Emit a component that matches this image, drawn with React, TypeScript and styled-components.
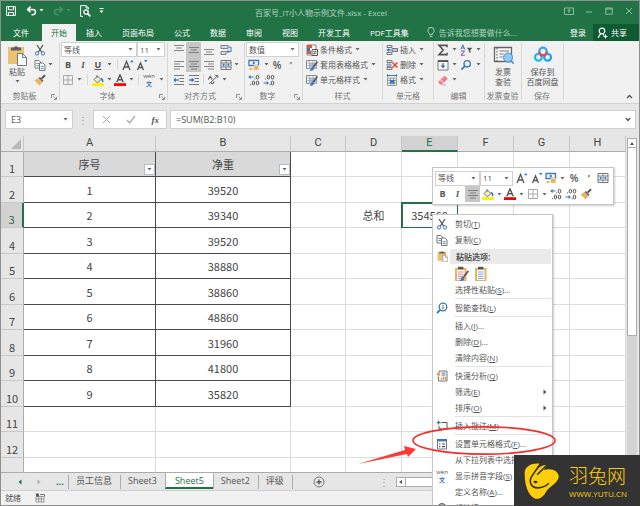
import React from "react";
import styled, { createGlobalStyle, css } from "styled-components";

const ui = `"Open Sans", "Noto Sans CJK SC", sans-serif`;
const GREEN = "#217346";
const INK = "#555";
const BLUE = "#3b78b8";
const SAND = "#e8b462";

const GlobalStyle = createGlobalStyle`
  * { box-sizing: border-box; }
  html, body { margin: 0; }
  body { font: 8px/12px ${ui}; color: #555; }
  button, input, select { font: inherit; color: inherit; margin: 0; padding: 0; border: 0; background: none; border-radius: 0; }
  svg { display: block; flex: none; }
`;

const Window = styled.main`
  position: relative;
  display: flex;
  flex-direction: column;
  height: 100vh;
  overflow: hidden;
  border: 1px solid #8f8f8f;
  background: #e6e6e6;
`;

/* ---------- title and tabs ---------- */
const TitleBar = styled.header`
  display: grid;
  grid-template-columns: 1fr auto 1fr;
  align-items: center;
  height: 23px;
  padding: 0 3px 4px 5px;
  background: ${GREEN};
  color: #b4d3c1;
`;
const QuickAccess = styled.div`
  display: flex;
  align-items: center;
  color: #fff;
`;
const Title = styled.h1`
  margin: 0;
  padding-top: 4px;
  font-size: 8px;
  line-height: 12px;
  font-weight: 400;
`;
const WindowButtons = styled.div`
  display: flex;
  justify-content: flex-end;
  gap: 6px;
`;
const TabRow = styled.nav`
  display: flex;
  height: 17px;
  padding-left: 2px;
  background: ${GREEN};
  color: #fff;
`;
const Tab = styled.button<{ $active?: boolean }>`
  padding: 0 10px;
  white-space: nowrap;
  ${(p) => p.$active && css`padding: 0 9px; background: #f1f1f1; color: ${GREEN};`}
  &:first-child { margin-right: 3px; }
`;
const TellMe = styled.button`
  display: flex;
  align-items: center;
  gap: 4px;
  margin-left: 8px;
  color: #b4d3c1;
  white-space: nowrap;
`;
const Account = styled.button`
  margin-left: auto;
  padding: 0 7px;
`;
const Share = styled.button`
  display: flex;
  align-items: center;
  gap: 3px;
  width: 46px;
  padding-left: 4px;
  background: #0e5a32;
`;

/* ---------- ribbon ---------- */
const Ribbon = styled.section`
  display: flex;
  height: 63px;
  background: #f1f1f1;
  border-bottom: 1px solid #d2d2d2;
`;
const Group = styled.div<{ $w: number; $pad?: number }>`
  position: relative;
  display: flex;
  flex-direction: column;
  flex: none;
  width: ${(p) => p.$w}px;
  padding: 1px 0 0 ${(p) => p.$pad ?? 0}px;
  &::after {
    content: "";
    position: absolute;
    top: 2px;
    right: 0;
    bottom: 3px;
    border-right: 1px solid #d8d8d8;
  }
`;
const GroupLabel = styled.div<{ $shift?: number }>`
  display: flex;
  justify-content: center;
  align-items: center;
  margin-top: auto;
  padding-right: ${(p) => p.$shift ?? 0}px;
  height: 15px;
  color: #777;
  white-space: nowrap;
`;
const Launcher = styled.button`
  position: absolute;
  right: 3px;
  bottom: 3px;
`;
const Line = styled.div`
  display: flex;
  align-items: center;
  height: 15px;
  flex: none;
`;
const ToolButton = styled.button<{ $w: number; $on?: boolean }>`
  display: flex;
  align-items: center;
  justify-content: center;
  flex: none;
  align-self: stretch;
  width: ${(p) => p.$w}px;
  color: ${INK};
  background: ${(p) => (p.$on ? "#c6c6c6" : "transparent")};
`;
const Divider = styled.span<{ $w: number; $clear?: boolean }>`
  flex: none;
  width: ${(p) => p.$w}px;
  height: 11px;
  background: linear-gradient(${(p) => (p.$clear ? "transparent, transparent" : "#d8d8d8, #d8d8d8")}) center / 1px 100% no-repeat;
`;
const Glyph = styled.b`
  font: 700 9px/12px ${ui};
`;
const Percent = styled.span`
  font: 600 10px/12px ${ui};
`;
const ItalicGlyph = styled.i`
  font: italic 700 9px/12px "Liberation Serif", serif;
`;
const UnderGlyph = styled.u`
  font: 700 9px/12px ${ui};
`;
const TextTool = styled.button`
  display: flex;
  align-items: center;
  gap: 2px;
  height: 15px;
  white-space: nowrap;
  & > svg:last-child { margin-left: 1px; }
`;
const BigTool = styled.button<{ $w?: string }>`
  display: flex;
  flex-direction: column;
  align-items: center;
  width: ${(p) => p.$w ?? "100%"};
  padding: ${(p) => (p.$w ? "2px" : "0")} 1px 0 0;
  line-height: 10px;
  white-space: nowrap;
  & > span { margin-top: 1px; }
`;
const PickerBox = styled.span<{ $w: number }>`
  position: relative;
  display: flex;
  align-items: center;
  flex: none;
  width: ${(p) => p.$w}px;
  height: 15px;
  background: #fff;
  border: 1px solid #d0d0d0;
  select {
    appearance: none;
    width: 100%;
    height: 100%;
    padding-left: 2px;
    outline: 0;
  }
  svg {
    position: absolute;
    right: 3px;
    pointer-events: none;
  }
`;
const ClipRows = styled.div`
  display: flex;
`;
const Collapse = styled.button`
  margin: auto 6px 4px auto;
`;

/* ---------- formula bar ---------- */
const FormulaBar = styled.section`
  display: flex;
  align-items: center;
  height: 32px;
  padding: 0 3px 1px 4px;
  flex: none;
`;
const Field = styled.div<{ $w?: number }>`
  display: flex;
  align-items: center;
  ${(p) => (p.$w ? css`flex: none; width: ${p.$w}px;` : css`flex: 1;`)}
  height: 19px;
  padding: 0 4px 0 5px;
  background: #fff;
  border: 1px solid #d0d0d0;
  font-size: 9px;
  input { flex: 1; min-width: 0; outline: 0; }
`;
const Grip = styled.span`
  width: 20px;
  text-align: center;
  color: #999;
  font-size: 10px;
`;
const FormulaActions = styled(Field)`
  justify-content: space-between;
  padding: 0 7px 0 8px;
  margin-right: 3px;
`;

/* ---------- sheet ---------- */
const Workspace = styled.section`
  display: flex;
  flex: 1;
  min-height: 0;
`;
const SheetPane = styled.div`
  flex: 1;
  min-width: 0;
  overflow: hidden;
`;
const Grid = styled.table`
  width: 100%;
  table-layout: fixed;
  border-collapse: separate;
  border-spacing: 0;
  font: 11px/14px "Noto Sans CJK SC", sans-serif;
  color: #444;
`;
const Row = styled.tr<{ $h: number }>`
  height: ${(p) => p.$h}px;
`;
const ColHead = styled.th<{ $on?: boolean }>`
  height: 16px;
  padding: 0;
  font: 400 11px/14px Roboto, sans-serif;
  vertical-align: top;
  background: ${(p) => (p.$on ? "#d2d2d2" : "#e6e6e6")};
  color: ${(p) => (p.$on ? GREEN : "#444")};
  border-right: 1px solid #c8c8c8;
  border-bottom: ${(p) => (p.$on ? `2px solid ${GREEN}` : "1px solid #ababab")};
`;
const Corner = styled(ColHead)`
  vertical-align: bottom;
  svg { margin: 0 2px 2px auto; }
`;
const RowHead = styled.th<{ $on?: boolean }>`
  padding: 0 0 1px;
  vertical-align: bottom;
  line-height: 13px;
  font-weight: 400;
  background: ${(p) => (p.$on ? "#d2d2d2" : "#e6e6e6")};
  color: ${(p) => (p.$on ? GREEN : "#444")};
  border-right: ${(p) => (p.$on ? `2px solid ${GREEN}` : "1px solid #ababab")};
  border-bottom: 1px solid #c8c8c8;
`;
const Cell = styled.td<{ $boxed?: boolean; $head?: boolean; $picked?: boolean }>`
  position: relative;
  padding: 0;
  text-align: center;
  background: ${(p) => (p.$head ? "#d9d9d9" : "#fff")};
  border-right: 1px solid ${(p) => (p.$boxed ? "#4a4a4a" : "#dcdcdc")};
  border-bottom: 1px solid ${(p) => (p.$boxed ? "#4a4a4a" : "#dcdcdc")};
  ${(p) => p.$picked && css`outline: 2px solid ${GREEN}; outline-offset: -1px;`}
`;
const FilterButton = styled.button`
  position: absolute;
  right: 0;
  bottom: 1px;
  display: grid;
  place-items: center;
  width: 11px;
  height: 11px;
  background: #fdfdfe;
  border: 1px solid #b5bccb;
`;
const VScroll = styled.div`
  display: flex;
  flex-direction: column;
  width: 13px;
  padding: 2px 2px 0 1px;
  background: #e6e6e6;
`;
const ScrollButton = styled.button`
  display: grid;
  place-items: center;
  flex: none;
  width: 10px;
  height: 10px;
  background: #fff;
  border: 1px solid #ababab;
`;
const VTrack = styled.div`
  flex: 1;
  width: 10px;
  background: #d4d4d4;
`;
const VThumb = styled.div`
  height: 58%;
  background: #fff;
  border: 1px solid #ababab;
  border-top-width: 0;
`;

/* ---------- sheet tabs and status ---------- */
const SheetBar = styled.nav`
  display: flex;
  align-items: center;
  flex: none;
  height: 18px;
  border-top: 1px solid #ababab;
  font-size: 9px;
`;
const SheetNav = styled.div`
  display: flex;
  align-items: center;
  gap: 15px;
  width: 67px;
  padding-left: 17px;
  color: ${GREEN};
`;
const SheetTab = styled.button<{ $on?: boolean }>`
  height: 14px;
  padding: 0 8px 1px 7px;
  border-left: 1px solid #ababab;
  white-space: nowrap;
  ${(p) =>
    p.$on &&
    css`
      align-self: flex-start;
      height: 16px;
      padding: 1px 9px 0;
      margin-right: -1px;
      background: #fff;
      color: ${GREEN};
      border-right: 1px solid #ababab;
      border-bottom: 2px solid ${GREEN};
    `}
`;
const AddSheet = styled.button`
  height: 14px;
  padding-left: 20px;
  border-left: 1px solid #ababab;
`;
const HScroll = styled.div`
  display: flex;
  flex: 1;
  margin: 0 3px 0 2px;
`;
const HTrack = styled.div`
  flex: 1;
  height: 10px;
  background: #fff;
  border: 1px solid #ababab;
  border-left: 0;
`;
const StatusBar = styled.footer`
  display: flex;
  align-items: center;
  gap: 14px;
  flex: none;
  height: 15px;
  padding-left: 4px;
  background: #f1f1f1;
  border-top: 1px solid #d0d0d0;
`;

/* ---------- floating parts ---------- */
const Popup = styled.div`
  position: absolute;
  left: 431px;
  background: #fff;
  border: 1px solid #c6c6c6;
  box-shadow: 1px 1px 2px rgba(0, 0, 0, 0.2);
`;
const MiniToolbar = styled(Popup)`
  top: 166px;
  width: 182px;
  height: 38px;
  padding: 2px;
`;
const MiniLine = styled(Line)`
  height: 16px;
`;
const Menu = styled(Popup)`
  top: 213px;
  width: 121px;
  padding: 1px 1px 4px;
`;
const MenuItem = styled.button`
  display: grid;
  grid-template-columns: 21px 1fr 8px;
  align-items: center;
  width: 100%;
  height: 16px;
  text-align: left;
  white-space: nowrap;
`;
const IconSlot = styled.span`
  display: flex;
  justify-content: center;
  width: 16px;
`;
const MenuHeading = styled.div`
  display: grid;
  grid-template-columns: 16px 1fr;
  align-items: center;
  height: 16px;
  strong { padding-left: 6px; background: #eaeaea; line-height: 15px; font-weight: 700; }
`;
const PasteRow = styled.div`
  display: flex;
  gap: 6px;
  height: 18px;
  padding: 1px 0 0 20px;
`;
const Rule = styled.hr`
  height: 1px;
  margin: 0 0 1px 21px;
  border: 0;
  background: #e2e2e2;
`;
const Callout = styled.svg`
  position: absolute;
  left: 355px;
  top: 420px;
  pointer-events: none;
`;
const Brand = styled.aside`
  position: fixed;
  right: 0;
  bottom: 0;
  display: flex;
  align-items: center;
  gap: 10px;
  width: 126px;
  height: 51px;
  padding-left: 10px;
  background: #333;
  color: #ffce0a;
`;
const BrandName = styled.div`
  font: 300 19px/26px "Noto Sans CJK SC", sans-serif;
`;
const BrandUrl = styled.div`
  font: 8px/12px ${ui};
`;

/* ---------- drawings ---------- */
type SvgProps = { s?: number; h?: number; vb?: string; children: React.ReactNode };
const Svg = ({ s = 12, h, vb = "0 0 12 12", children }: SvgProps) => (
  <svg width={s} height={h ?? s} viewBox={vb} fill="none" stroke={INK} strokeWidth="1" aria-hidden="true">{children}</svg>
);
const Caret = ({ c = "#666" }: { c?: string }) => (
  <svg width="5" height="3" viewBox="0 0 5 3" aria-hidden="true"><path d="M0.5 0h4L2.5 2.6z" fill={c} /></svg>
);
const Cut = () => <Svg><path d="M3 1l4.6 7M9 1L4.4 8" strokeWidth="1.3" /><g stroke={BLUE}><circle cx="3" cy="9.4" r="1.7" /><circle cx="9" cy="9.4" r="1.7" /></g></Svg>;
const Copy = () => <Svg><path d="M1 1.5h4l1.5 1.5v6H1z" fill="#fff" stroke="#777" /><path d="M2.3 4.5h3M2.3 6.5h3" stroke={BLUE} strokeWidth="0.8" /><path d="M5.5 4h3.4L11 6v5.5H5.5z" fill="#fff" stroke="#777" /><path d="M6.8 7.5h3M6.8 9.5h3" stroke={BLUE} strokeWidth="0.8" /></Svg>;
const Brush = () => <Svg><path d="M.5 6.5l4-2.5 4 4-3 3.5z" fill={SAND} stroke="none" /><path d="M4.5 4l4 4 1-1.2L6 3z" fill="#666" stroke="none" /><path d="M7.6 4.6L11 1.2" strokeWidth="2" /></Svg>;
const Paste = ({ s, h }: { s: number; h: number }) => (
  <Svg s={s} h={h} vb="0 0 20 22"><path d="M1 3h16v17H1z" fill="#ecc176" stroke="none" /><path d="M4 3.5h3a2.2 2.2 0 014 0h3V6.5H4z" fill="#606060" stroke="none" /><path d="M10.5 9.5h5l4 4v8h-9z" fill="#fff" stroke="#777" /><path d="M15.5 9.5v4h4" stroke="#777" /></Svg>
);
const Grow = ({ up }: { up?: boolean }) => (
  <Svg><path d={up ? "M1 11L4.5 2.5 8 11M2.4 8h4.2" : "M1.5 11l3-7 3 7M2.6 8.5h3.8"} strokeWidth="1.3" /><path d={up ? "M8 3.2L9.8 1l1.8 2.2z" : "M8 1h3.6L9.8 3.2z"} fill={BLUE} stroke="none" /></Svg>
);
const Borders = () => <Svg><path d="M1.5 1.5h9v9h-9zM6 1.5v9M1.5 6h9" stroke="#aaa" /></Svg>;
const Fill = () => <Svg><path d="M5 1v3M2 5.5L5.5 2 9 5.5 5.8 8.4 4.6 8.4z" fill="#f6e6c6" stroke="#777" /><path d="M9 4.5q2 1 1.6 3.5" stroke={BLUE} strokeWidth="1.6" /><path d="M0 9.2h12V12H0z" fill="#fff200" stroke="none" /></Svg>;
const FontColor = () => <Svg><path d="M2.8 8.2L6 .8l3.2 7.4M4 5.8h4" strokeWidth="1.4" /><path d="M0 9.2h12V12H0z" fill="#f00" stroke="none" /></Svg>;
const PinyinBox = styled.span`
  display: flex;
  flex-direction: column;
  align-items: center;
  font: 6px/7px ${ui};
  em { font: 700 6px/7px "Noto Sans CJK SC", sans-serif; color: ${BLUE}; }
`;
const Pinyin = () => <PinyinBox>wén<em>文</em></PinyinBox>;
const alignPaths = {
  t: "M1 1.5h10M3 4h6M1 6.5h10",
  m: "M1 3.5h10M3 6h6M1 8.5h10",
  b: "M1 5.5h10M3 8h6M1 10.5h10",
  l: "M1 2.5h10M1 5h6M1 7.5h10M1 10h6",
  c: "M1 2.5h10M3 5h6M1 7.5h10M3 10h6",
  r: "M1 2.5h10M5 5h6M1 7.5h10M5 10h6",
};
const Align = ({ v }: { v: keyof typeof alignPaths }) => <Svg><path d={alignPaths[v]} stroke="#777" strokeWidth="0.9" /></Svg>;
const Indent = ({ out }: { out?: boolean }) => (
  <Svg><path d="M1 1.5h10M6.5 4.5H11M6.5 7.5H11M1 10.5h10" stroke="#777" /><path d="M1 6h5" stroke={BLUE} strokeWidth="1.4" /><path d={out ? "M3 3.6L.4 6 3 8.4z" : "M3.6 3.6L6.2 6 3.6 8.4z"} fill={BLUE} stroke="none" /></Svg>
);
const Orient = () => <Svg><path d="M2 10L10.5 1.8M10.8 4V1.5H8.2" strokeWidth="0.9" /><path d="M1.2 5.5l2-3.2 2 3.2M4 8.2a1.4 1.4 0 102.6-.8" strokeWidth="1.1" /></Svg>;
const Wrap = () => <Svg><path d="M1 1.5h7v3H1zM1 7.5h5v3H1z" fill="#cfe0f2" stroke="#777" strokeWidth="0.9" /><path d="M8.5 3.2H11v4.4H7.4" stroke={BLUE} /><path d="M8.6 5.8L6.4 7.6l2.2 1.8z" fill={BLUE} stroke="none" /></Svg>;
const Merge = () => <Svg><path d="M1 1.5h10v9H1zM1 4h10M1 8h10M6 1.5V4M6 8v2.5" stroke="#777" /><path d="M3 6h6" stroke={BLUE} /><path d="M4 4.6L2.2 6 4 7.4zM8 4.6L9.8 6 8 7.4z" fill={BLUE} stroke="none" /></Svg>;
const Currency = () => <Svg><path d="M1 1.5h9.5v5H1z" fill="#fff" stroke={BLUE} strokeWidth="1.3" /><circle cx="5.7" cy="4" r="1.2" fill={BLUE} stroke="none" /><path d="M5.5 7.4c0-1.4 5.5-1.4 5.5 0v3c0 1.4-5.5 1.4-5.5 0z" fill={SAND} stroke="#fff" strokeWidth="0.7" /><path d="M1.5 9h3v2h-3z" fill={SAND} stroke="none" /></Svg>;
const Decimals = ({ more }: { more?: boolean }) => (
  <Svg>
    {more ? (
      <><ellipse cx="9.5" cy="3.2" rx="1.3" ry="1.9" /><path d="M6.8 4.4v1" /><ellipse cx="5.4" cy="9" rx="1.2" ry="1.9" /><ellipse cx="9.5" cy="9" rx="1.3" ry="1.9" /><path d="M2.6 10.2v1" /></>
    ) : (
      <><ellipse cx="5.4" cy="3.2" rx="1.2" ry="1.9" /><ellipse cx="9.5" cy="3.2" rx="1.3" ry="1.9" /><path d="M2.6 4.4v1" /><ellipse cx="9.5" cy="9" rx="1.3" ry="1.9" /><path d="M7 10.2v1" /></>
    )}
    <path d={more ? "M1.5 3h4" : "M.5 9h4"} stroke={BLUE} />
    <path d={more ? "M2.6 1L.2 3l2.4 2z" : "M3.6 7L6 9l-2.4 2z"} fill={BLUE} stroke="none" />
  </Svg>
);
const CondFmt = () => <Svg><path d="M1 1h9v10H1z" fill="#fff" stroke="#888" /><path d="M1 1h5v3H1zM1 7h4v3H1z" fill="#e2553b" stroke="none" /><path d="M1 4h3v3H1z" fill={BLUE} stroke="none" /><path d="M6 5.5h5.5v6H6z" fill="#fff" /><path d="M7 7.5h3.5M7 9.5h3.5M9.6 6.5L8 10.6" strokeWidth="0.7" /></Svg>;
const TableFmt = () => <Svg><path d="M.5 1.5h10v8H.5z" fill="#fff" stroke="#888" /><path d="M3.5 4h7v5.5h-7z" fill="#a8c9ea" stroke="none" /><path d="M.5 4h10M.5 6.7h10M3.5 1.5v8M7 1.5v8" stroke="#999" strokeWidth="0.7" /><path d="M11.4 2.5L7.4 8" strokeWidth="1.6" /><path d="M3.5 11.8c2 .2 4.6-.2 4.6-3L6.6 7.6C5 8 5.4 10.6 3.5 11.8z" fill={BLUE} stroke="none" /></Svg>;
const CellIns = () => <Svg><path d="M1 1.5h5v2H1zM1 8.5h5v2H1z" stroke="#777" /><path d="M6 4.5h5.5v3H6z" fill="#a8c9ea" stroke="#777" /><path d="M1.5 6H5" stroke={BLUE} strokeWidth="1.4" /><path d="M3 4L.4 6 3 8z" fill={BLUE} stroke="none" /></Svg>;
const CellDel = () => <Svg><path d="M1 1.5h5v2H1zM1 8.5h5v2H1z" stroke="#777" /><path d="M1 5h4v2.4H1z" fill="#a8c9ea" stroke="#777" strokeWidth="0.7" /><path d="M6.5 3.5l5 5M11.5 3.5l-5 5" stroke="#e0492f" strokeWidth="1.5" /></Svg>;
const CellFmt = () => <Svg><path d="M1.5 4h9v7.5h-9zM1.5 6.4h9M1.5 9h9M4.4 4v7.5M7.6 4v7.5" stroke="#888" strokeWidth="0.8" /><path d="M4 6h4.5v3.6H4z" fill={BLUE} stroke="none" /><path d="M2 1.5h8M1.5.2v2.6M10.5.2v2.6" stroke={BLUE} /></Svg>;
const Sigma = () => <Svg><path d="M10 3.2V1.4H2l4.2 4.6L2 10.6h8V8.8" strokeWidth="1.6" /></Svg>;
const SortAZ = () => <Svg s={13} h={12} vb="0 0 13 12"><path d="M.8 5.6L2.8.8l2 4.8M1.6 4h2.4" stroke={BLUE} /><path d="M1 7h3.6L1 11.2h3.8" stroke="#8a4aa5" /><path d="M6.6 3.8h5.8L10.4 6v3L8.8 8V6z" fill="#555" stroke="none" /></Svg>;
const FillDown = () => <Svg><path d="M1 1.5h10v9.5H1z" fill="#fff" stroke="#777" /><path d="M1 2.2h10" strokeWidth="1.6" /><path d="M6 4v3.6" stroke={BLUE} strokeWidth="1.4" /><path d="M3.4 6.6h5.2L6 9.6z" fill={BLUE} stroke="none" /></Svg>;
const Find = () => <Svg><circle cx="7.2" cy="4.8" r="3.2" stroke={BLUE} strokeWidth="1.3" /><path d="M4.8 7.2L1.4 10.6" stroke={BLUE} strokeWidth="1.8" /></Svg>;
const Eraser = () => <Svg><path d="M1.5 7.5L7.8 1.8l3 3-6 6H3.6L1.5 8.7z" fill="#ea7f8f" stroke="none" /><path d="M3.4 5.8l3.2 3.2" stroke="#fff" /><path d="M5.5 11H9" stroke="#999" strokeWidth="0.8" /></Svg>;
const Invoice = () => <Svg s={21} h={24} vb="0 -3 21 24"><path d="M1.5 2.5h17v14h-17z" fill="#f8f8f8" stroke="#666" strokeWidth="1.3" /><path d="M4 3v13" strokeDasharray="1.5 1.5" /><path d="M6.5 6h9.5M6.5 9h4M6.5 12h3" stroke="#777" /><circle cx="15" cy="12.5" r="4.5" fill="#90c8f6" stroke="#4a94d2" /><path d="M18.2 15.8l2.4 3" stroke="#4a94d2" strokeWidth="1.6" /></Svg>;
const Cloud = () => <Svg s={20} h={24} vb="0 -3 20 24"><circle cx="5.4" cy="12.3" r="3.4" stroke="#20b8f7" strokeWidth="2.3" /><circle cx="14.6" cy="12.3" r="3.4" stroke="#20a5f5" strokeWidth="2.3" /><circle cx="10" cy="6.4" r="3.7" stroke="#35a7ee" strokeWidth="2.3" /><path d="M6.3 6.4a3.7 3.7 0 007.4 0" stroke="#f0465a" strokeWidth="2.3" /><path d="M7 9.6l2 2M13 9.6l-2 2" stroke="#f0465a" strokeWidth="1.6" /></Svg>;
const LaunchIcon = () => <Svg s={6} vb="0 0 6 6"><path d="M.5 4V.5H4M2.5 2.5l2.5 2.5M5.5 2.8v2.7H2.8" strokeWidth="0.8" stroke="#777" /></Svg>;
const ClipboardOpt = ({ brush }: { brush?: boolean }) => (
  <Svg s={15} h={16} vb="0 0 15 16"><path d="M1 2h11.5v13H1z" fill={SAND} stroke="none" /><path d="M3 4h7.5v10H3z" fill="#fff" stroke="none" /><path d="M4 .8h5.4V3.2H4z" fill="#555" stroke="none" /><path d="M4 6h5.5M4 8.2h5.5M4 10.4h5.5M4 12.5h5.5" stroke={brush ? "#d77" : "#6aa0d8"} strokeWidth="0.9" />{brush && <><path d="M14.3 5L10 10.5" strokeWidth="1.8" /><path d="M5.5 15c3 .4 5.2-.8 5.2-3.6L9 10c-2 .6-1.4 3.6-3.5 5z" fill={BLUE} stroke="none" /></>}</Svg>
);
const SmartFind = () => <Svg><circle cx="7" cy="5" r="3.8" stroke={BLUE} strokeWidth="1.3" /><path d="M4.2 7.8L1 11" stroke={BLUE} strokeWidth="1.9" /><path d="M7 4.6v2.6M7 2.7v1" strokeWidth="1.1" /></Svg>;
const Analysis = () => <Svg><path d="M3 1h8v10H2.5V7" fill="#fff" stroke="#777" /><path d="M5.5 3h4M5.5 5h4" stroke={BLUE} /><path d="M5.5 9.8V8M7.5 9.8V6.6M9.5 9.8V7" stroke="#e08a3c" strokeWidth="1.3" /><path d="M3 1L.6 5h1.8L1 9l3.6-5H3.2L4.4 1z" fill="#e08a3c" stroke="none" /></Svg>;
const Comment = () => <Svg><path d="M5.5 2.5H11v6.2H7L5.3 10.6V8.7H3V6" /><path d="M2.6.6v4M.6 2.6h4" stroke="#2f8f5b" strokeWidth="1.2" /></Svg>;
const FormatCells = () => <Svg><path d="M1.5 1.5h9v9.5h-9z" fill="#fff" stroke="#777" /><path d="M1 2.2h10" stroke={BLUE} strokeWidth="2.4" /><path d="M3 6h1.4M3 8.6h1.4M6 6h3M6 8.6h3" strokeWidth="1.2" /></Svg>;
const Globe = () => <Svg><circle cx="6" cy="5.5" r="4" /><path d="M2 5.5h8M6 1.5c-2.4 2.4-2.4 5.6 0 8M6 1.5c2.4 2.4 2.4 5.6 0 8" strokeWidth="0.8" /></Svg>;
const Right = () => <Svg s={4} h={6} vb="0 0 4 6"><path d="M.5.5v5L3.5 3z" fill="#555" stroke="none" /></Svg>;

/* ---------- building blocks ---------- */
type ToolProps = { w: number; label: string; on?: boolean; children: React.ReactNode };
const Tool = ({ w, label, on, children }: ToolProps) => <ToolButton $w={w} $on={on} aria-label={label}>{children}</ToolButton>;
const More = () => <Tool w={8} label="更多"><Caret /></Tool>;
const Picker = ({ w, label, value }: { w: number; label: string; value: string }) => (
  <PickerBox $w={w}><select aria-label={label} defaultValue={value}><option>{value}</option></select><Caret /></PickerBox>
);
const Launch = () => <Launcher aria-label="对话框启动器"><LaunchIcon /></Launcher>;

const tabs = ["文件", "开始", "插入", "页面布局", "公式", "数据", "审阅", "视图", "开发工具", "PDF工具集"];
const columns = ["A", "B", "C", "D", "E", "F", "G", "H"];
const weights = [39520, 39340, 39520, 38880, 38860, 48860, 31960, 41800, 35820];

type Entry = { text: string; hot: string; dots?: boolean; icon?: React.ReactNode; sub?: boolean };
const sections: Entry[][] = [
  [{ text: "智能查找", hot: "L", icon: <SmartFind /> }],
  [{ text: "插入", hot: "I", dots: true }, { text: "删除", hot: "D", dots: true }, { text: "清除内容", hot: "N" }],
  [{ text: "快速分析", hot: "Q", icon: <Analysis /> }, { text: "筛选", hot: "E", sub: true }, { text: "排序", hot: "O", sub: true }],
  [{ text: "插入批注", hot: "M", icon: <Comment /> }],
  [
    { text: "设置单元格格式", hot: "F", dots: true, icon: <FormatCells /> },
    { text: "从下拉列表中选择", hot: "K", dots: true },
    { text: "显示拼音字段", hot: "S", icon: <Pinyin /> },
    { text: "定义名称", hot: "A", dots: true },
    { text: "超链接", hot: "I", dots: true, icon: <Globe /> },
  ],
];
const Item = ({ text, hot, dots, icon, sub }: Entry) => (
  <MenuItem role="menuitem"><IconSlot>{icon}</IconSlot><span>{text}(<u>{hot}</u>){dots && "..."}</span>{sub && <Right />}</MenuItem>
);

function cellText(col: string, row: number): React.ReactNode {
  if (col === "A" && row === 1) return "序号";
  if (col === "B" && row === 1) return "净重";
  if (col === "A" && row <= 10) return row - 1;
  if (col === "B" && row <= 10) return weights[row - 2];
  if (col === "D" && row === 3) return "总和";
  if (col === "E" && row === 3) return "354560";
  return null;
}

function RibbonGroups() {
  return (
    <Ribbon>
      <Group $w={59}>
        <ClipRows>
          <BigTool $w="33px">
            <Paste s={20} h={22} />
            <span>粘贴</span><Svg s={5} h={7} vb="0 0 5 7"><path d="M.5 3h4L2.5 5.6z" fill="#666" stroke="none" /></Svg>
          </BigTool>
          <div>
            <Line><Tool w={12} label="剪切"><Cut /></Tool></Line>
            <Line><Tool w={12} label="复制"><Copy /></Tool><More /></Line>
            <Line><Tool w={12} label="格式刷"><Brush /></Tool></Line>
          </div>
        </ClipRows>
        <GroupLabel $shift={12}>剪贴板</GroupLabel><Launch />
      </Group>
      <Group $w={108} $pad={1}>
        <Line><Picker w={76} label="字体" value="等线" /><Picker w={28} label="字号" value="11" /></Line>
        <Line><Tool w={14} label="加粗"><Glyph>B</Glyph></Tool><Tool w={16} label="倾斜"><ItalicGlyph>I</ItalicGlyph></Tool><Tool w={14} label="下划线"><UnderGlyph>U</UnderGlyph></Tool><More /><Divider $w={8} /><Tool w={14} label="增大字号"><Grow up /></Tool><Tool w={14} label="减小字号"><Grow /></Tool></Line>
        <Line><Tool w={14} label="边框"><Borders /></Tool><More /><Divider $w={8} /><Tool w={14} label="填充颜色"><Fill /></Tool><More /><Tool w={14} label="字体颜色"><FontColor /></Tool><More /><Divider $w={6} /><Tool w={16} label="拼音"><Pinyin /></Tool><More /></Line>
        <GroupLabel $shift={14}>字体</GroupLabel><Launch />
      </Group>
      <Group $w={77} $pad={3}>
        <Line><Tool w={15} label="顶端对齐"><Align v="t" /></Tool><Tool w={15} label="垂直居中" on><Align v="m" /></Tool><Tool w={15} label="底端对齐"><Align v="b" /></Tool><Divider $w={4} $clear /><Tool w={12} label="自动换行"><Wrap /></Tool></Line>
        <Line><Tool w={15} label="左对齐"><Align v="l" /></Tool><Tool w={15} label="居中" on><Align v="c" /></Tool><Tool w={15} label="右对齐"><Align v="r" /></Tool><Divider $w={4} $clear /><Tool w={12} label="合并后居中"><Merge /></Tool><More /></Line>
        <Line><Tool w={15} label="减少缩进"><Indent out /></Tool><Tool w={15} label="增加缩进"><Indent /></Tool><Divider $w={4} /><Tool w={15} label="方向"><Orient /></Tool><More /></Line>
        <GroupLabel $shift={16}>对齐方式</GroupLabel><Launch />
      </Group>
      <Group $w={58} $pad={1}>
        <Line><Picker w={53} label="数字格式" value="数值" /></Line>
        <Line><Tool w={16} label="会计格式"><Currency /></Tool><More /><Tool w={14} label="百分比"><Percent>%</Percent></Tool><Tool w={14} label="千位分隔"><Glyph>’</Glyph></Tool></Line>
        <Line><Tool w={15} label="增加小数位"><Decimals more /></Tool><Tool w={16} label="减少小数位"><Decimals /></Tool></Line>
        <GroupLabel $shift={14}>数字</GroupLabel><Launch />
      </Group>
      <Group $w={80} $pad={3}>
        <TextTool><CondFmt />条件格式<Caret /></TextTool>
        <TextTool><TableFmt />套用表格格式<Caret /></TextTool>
        <TextTool><TableFmt />单元格样式<Caret /></TextTool>
        <GroupLabel $shift={4}>样式</GroupLabel>
      </Group>
      <Group $w={51} $pad={3}>
        <TextTool><CellIns />插入<Caret /></TextTool>
        <TextTool><CellDel />删除<Caret /></TextTool>
        <TextTool><CellFmt />格式<Caret /></TextTool>
        <GroupLabel $shift={4}>单元格</GroupLabel>
      </Group>
      <Group $w={51} $pad={2}>
        <Line><Tool w={14} label="自动求和"><Sigma /></Tool><More /><Tool w={16} label="排序和筛选"><SortAZ /></Tool><More /></Line>
        <Line><Tool w={14} label="填充"><FillDown /></Tool><More /><Tool w={16} label="查找"><Find /></Tool><More /></Line>
        <Line><Tool w={14} label="清除"><Eraser /></Tool><More /></Line>
        <GroupLabel $shift={4}>编辑</GroupLabel>
      </Group>
      <Group $w={37}>
        <BigTool><Invoice /><span>发票<br />查验</span></BigTool>
        <GroupLabel $shift={2}>发票查验</GroupLabel>
      </Group>
      <Group $w={42}>
        <BigTool><Cloud /><span>保存到<br />百度网盘</span></BigTool>
        <GroupLabel $shift={2}>保存</GroupLabel>
      </Group>
      <Collapse aria-label="折叠功能区"><Svg s={7} h={5} vb="0 0 7 5"><path d="M1 4l2.5-2.5L6 4" strokeWidth="1.3" /></Svg></Collapse>
    </Ribbon>
  );
}

export default function App() {
  return (
    <>
      <GlobalStyle />
      <Window>
        <TitleBar>
          <QuickAccess>
            <Tool w={10} label="保存"><svg width="10" height="10" viewBox="0 0 10 10" fill="none" stroke="#fff"><path d="M.6.6h8.8v8.8H.6zM2.5.6v3.2h5V.6M2.5 9.4V6.5h5v2.9" /></svg></Tool>
            <Divider $w={9} $clear />
            <Tool w={12} label="撤销"><svg width="11" height="10" viewBox="0 0 11 10" fill="none" stroke="#fff" strokeWidth="1.5"><path d="M4.5.6L1.6 3.4l2.9 2.8M2 3.4h4.5c4 0 4 5.4 0 5.4H5.5" /></svg></Tool>
            <Tool w={8} label="撤销列表"><Caret c="#fff" /></Tool>
            <Divider $w={7} $clear />
            <Tool w={12} label="恢复"><svg width="11" height="10" viewBox="0 0 11 10" fill="none" stroke="#4c8f6b" strokeWidth="1.5"><path d="M6.5.6l2.9 2.8-2.9 2.8M9 3.4H4.5c-4 0-4 5.4 0 5.4h1" /></svg></Tool>
            <Tool w={8} label="恢复列表"><Caret c="#4c8f6b" /></Tool>
            <Divider $w={8} $clear />
            <Tool w={11} label="打印预览"><svg width="11" height="12" viewBox="0 0 11 12" fill="none" stroke="#fff"><path d="M3 11.4H.6V.6h5.6l2.2 2.2v1.6M6 .6v2.4h2.4" /><circle cx="6" cy="7" r="2.2" strokeWidth="1.3" /><path d="M7.6 8.6l2.8 2.8" strokeWidth="1.6" /></svg></Tool>
            <Divider $w={6} $clear />
            <Tool w={8} label="自定义"><svg width="5" height="6" viewBox="0 0 5 6"><path d="M.5 0h4v1h-4zM.5 2.6h4L2.5 5z" fill="#fff" /></svg></Tool>
          </QuickAccess>
          <Title>百家号_IT小人物示例文件.xlsx - Excel</Title>
          <WindowButtons>
            {[
              ["功能区显示选项", "M1.5 3h9v6.5h-9zM6 8V4.6M4.6 6L6 4.6 7.4 6"],
              ["最小化", "M3 7h6"],
              ["最大化", "M2.8 3h6.4v6.2H2.8zM2.8 4h6.4"],
              ["关闭", "M3 3l6 6M9 3l-6 6"],
            ].map(([label, d]) => (
              <Tool key={label} w={14} label={label}><svg width="12" height="12" viewBox="0 0 12 12" fill="none" stroke="#8fbda3"><path d={d} /></svg></Tool>
            ))}
          </WindowButtons>
        </TitleBar>
        <TabRow>
          {tabs.map((t) => <Tab key={t} $active={t === "开始"}>{t}</Tab>)}
          <TellMe>
            <svg width="8" height="11" viewBox="0 0 8 11" fill="none" stroke="#b4d3c1"><path d="M2.6 7.5C2.6 6 .8 5.4.8 3.6a3.2 3.2 0 016.4 0C7.2 5.4 5.4 6 5.4 7.5zM2.8 9.4h2.6" /></svg>
            告诉我您想要做什么...
          </TellMe>
          <Account>登录</Account>
          <Share>
            <svg width="11" height="12" viewBox="0 0 11 12" fill="none" stroke="#fff" strokeWidth="1.2"><circle cx="5" cy="4" r="2.8" /><path d="M3.6 6.6L1 10.8M6 7l1 1.5M8.5 7.5v4M6.5 9.5h4" /></svg>
            共享
          </Share>
        </TabRow>
        <RibbonGroups />
        <FormulaBar>
          <Field $w={68}><input aria-label="名称框" defaultValue="E3" /><Caret /></Field>
          <Grip>⋮</Grip>
          <FormulaActions $w={74}>
            <Svg s={9} vb="0 0 9 9"><path d="M1 1l7 7M8 1L1 8" stroke="#aaa" /></Svg>
            <Svg s={10} h={9} vb="0 0 10 9"><path d="M1 5l2.6 3L9 1" stroke="#aaa" strokeWidth="1.3" /></Svg>
            <ItalicGlyph>fx</ItalicGlyph>
          </FormulaActions>
          <Field><input aria-label="编辑栏" defaultValue="=SUM(B2:B10)" /><Svg s={6} h={5} vb="0 0 6 5"><path d="M.8 1L3 3.4 5.2 1" strokeWidth="1.4" /></Svg></Field>
        </FormulaBar>
        <Workspace>
          <SheetPane>
            <Grid>
              <colgroup>
                {[23, 132, 135, 55, 56, 56, 56, 56].map((w, i) => <col key={i} width={w} />)}
                <col />
              </colgroup>
              <thead>
                <tr>
                  <Corner><Svg s={10} vb="0 0 10 10"><path d="M10 0v10H0z" fill="#b8b8b8" stroke="none" /></Svg></Corner>
                  {columns.map((c) => <ColHead key={c} $on={c === "E"}>{c}</ColHead>)}
                </tr>
              </thead>
              <tbody>
                {Array.from({ length: 13 }, (_, i) => i + 1).map((r) => (
                  <Row key={r} $h={r % 2 ? 25 : 26}>
                    <RowHead $on={r === 3}>{r < 13 ? r : null}</RowHead>
                    {columns.map((c) => {
                      const boxed = (c === "A" || c === "B") && r <= 10;
                      return (
                        <Cell key={c} $boxed={boxed} $head={boxed && r === 1} $picked={c === "E" && r === 3}>
                          {cellText(c, r)}
                          {boxed && r === 1 && <FilterButton aria-label="筛选"><Caret /></FilterButton>}
                        </Cell>
                      );
                    })}
                  </Row>
                ))}
              </tbody>
            </Grid>
          </SheetPane>
          <VScroll>
            <ScrollButton aria-label="向上滚动"><Svg s={4} h={3} vb="0 0 4 3"><path d="M0 3l2-3 2 3z" fill="#555" stroke="none" /></Svg></ScrollButton>
            <VTrack><VThumb /></VTrack>
          </VScroll>
        </Workspace>
        <SheetBar>
          <SheetNav>
            <Svg s={4} h={6} vb="0 0 4 6"><path d="M3.5.5v5L.5 3z" fill={GREEN} stroke="none" /></Svg>
            <Svg s={4} h={6} vb="0 0 4 6"><path d="M.5.5v5L3.5 3z" fill="#b0b0b0" stroke="none" /></Svg>
            <b>...</b>
          </SheetNav>
          {["员工信息", "Sheet3", "Sheet5", "Sheet2", "评级"].map((s) => <SheetTab key={s} $on={s === "Sheet5"}>{s}</SheetTab>)}
          <AddSheet aria-label="新工作表"><Svg s={12}><circle cx="6" cy="6" r="5" stroke="#777" /><path d="M6 3.5v5M3.5 6h5" strokeWidth="1.3" /></Svg></AddSheet>
          <Divider $w={49} $clear />
          <Grip>⋮</Grip>
          <HScroll><ScrollButton aria-label="向左滚动"><Svg s={3} h={4} vb="0 0 3 4"><path d="M3 0v4L0 2z" fill="#555" stroke="none" /></Svg></ScrollButton><HTrack /></HScroll>
        </SheetBar>
        <StatusBar>
          就绪
          <Svg s={10} vb="0 0 10 10"><path d="M1 3.5h8v5.5H1zM1 6h8M3.7 3.5V9M6.4 3.5V9" stroke="#888" strokeWidth="0.8" /><circle cx="2.4" cy="2" r="1.7" fill="#555" stroke="none" /><path d="M5 1.5h4.5v2" stroke="#777" /></Svg>
        </StatusBar>

        <MiniToolbar role="toolbar" aria-label="浮动工具栏">
          <MiniLine>
            <Picker w={45} label="字体" value="等线" /><Picker w={33} label="字号" value="11" /><Divider $w={2} $clear />
            <Tool w={14} label="增大字号"><Grow up /></Tool><Tool w={15} label="减小字号"><Grow /></Tool><Tool w={14} label="会计格式"><Currency /></Tool><More /><Tool w={16} label="百分比"><Percent>%</Percent></Tool><Tool w={14} label="千位分隔"><Glyph>’</Glyph></Tool><Tool w={14} label="合并后居中"><Merge /></Tool>
          </MiniLine>
          <MiniLine>
            <Tool w={15} label="加粗"><Glyph>B</Glyph></Tool><Tool w={15} label="倾斜"><ItalicGlyph>I</ItalicGlyph></Tool><Tool w={15} label="居中" on><Align v="c" /></Tool><Tool w={15} label="填充颜色"><Fill /></Tool><More /><Tool w={14} label="字体颜色"><FontColor /></Tool><More /><Tool w={15} label="边框"><Borders /></Tool><More /><Tool w={15} label="增加小数位"><Decimals more /></Tool><Tool w={15} label="减少小数位"><Decimals /></Tool><Tool w={15} label="格式刷"><Brush /></Tool>
          </MiniLine>
        </MiniToolbar>

        <Menu role="menu">
          <Item text="剪切" hot="T" icon={<Cut />} />
          <Item text="复制" hot="C" icon={<Copy />} />
          <MenuHeading><IconSlot><Paste s={11} h={12} /></IconSlot><strong>粘贴选项:</strong></MenuHeading>
          <PasteRow><Tool w={14} label="粘贴"><ClipboardOpt brush /></Tool><Tool w={14} label="粘贴值"><ClipboardOpt /></Tool></PasteRow>
          <Item text="选择性粘贴" hot="S" dots />
          {sections.map((items, i) => (
            <React.Fragment key={i}><Rule />{items.map((e) => <Item key={e.text} {...e} />)}</React.Fragment>
          ))}
        </Menu>

        <Callout width="206" height="50" viewBox="356 421 206 50" fill="none" aria-hidden="true">
          <ellipse cx="484" cy="440.5" rx="71" ry="13.6" stroke="#f42c2c" strokeWidth="1.6" />
          <path d="M358 464L405 450l-1-4 12 3-8 8-1-3z" fill="#fb3a38" />
        </Callout>

        <Brand>
          <svg width="35" height="38" viewBox="296 325 107 112" aria-hidden="true">
            <path d="M298 358C297 334 326 324 347 329L331 352C342 338 354 330 368 333L356 347C384 340 404 352 402 370C398 387 376 396 366 410C356 428 346 438 330 435C306 424 298 389 298 358Z" fill="#ffce0a" />
            <path d="M347 327L320 366C310 382 316 402 338 402C352 402 364 396 372 388" fill="none" stroke="#333" strokeWidth="5" />
            <path d="M368 331L336 362" stroke="#333" strokeWidth="5" />
            <ellipse cx="331" cy="384" rx="6" ry="4" fill="#333" />
          </svg>
          <div><BrandName>羽兔网</BrandName><BrandUrl>WWW.YUTU.CN</BrandUrl></div>
        </Brand>
      </Window>
    </>
  );
}
